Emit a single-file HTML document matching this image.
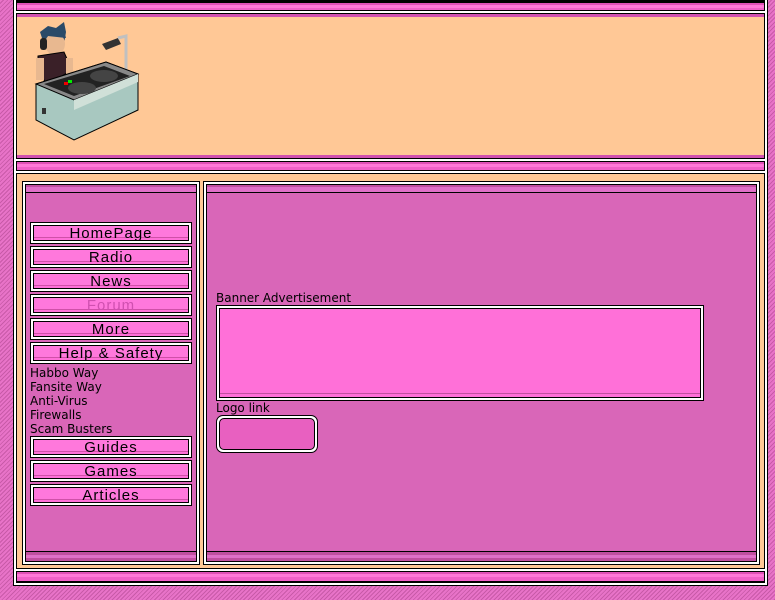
<!DOCTYPE html>
<html><head><style>
*{margin:0;padding:0;box-sizing:border-box}
body{width:775px;height:600px;overflow:hidden;position:relative;font-family:"Liberation Sans",sans-serif;
background:repeating-linear-gradient(135deg,#e873c8 0 2px,#c85aa8 2px 3px);}
.a{position:absolute}
.bar{background:linear-gradient(#e050b8 0 2px,#ff78d8 2px 5px,#f060c8 5px 100%);border:1px solid #000}
.btn{position:absolute;left:30px;width:162px;height:22px;border:1px solid #000;background:#fff;padding:2px}
.btn div{border:1px solid #000;height:16px;background:linear-gradient(#ff78dc 0 11px,#d050a8 11px 12px,#ff70d8 12px);text-align:center;font-size:15px;line-height:15px;letter-spacing:1px;color:#000}
.lk{position:absolute;left:30px;font-family:"DejaVu Sans",sans-serif;font-size:12px;line-height:14px;color:#000}
</style></head><body>
<div class="a" style="left:13px;top:0;width:755px;height:586px;background:#fff;border:1px solid #000;border-top:none"></div>
<div class="a" style="left:16px;top:0;width:749px;height:583px;background:#000"></div>
<div class="a bar" style="left:16px;top:2px;width:749px;height:9px"></div>
<div class="a" style="left:16px;top:11px;width:749px;height:2px;background:#fff"></div>
<div class="a" style="left:16px;top:13px;width:749px;height:146px;background:#ffc896;border:1px solid #000"></div>
<div class="a" style="left:17px;top:14px;width:747px;height:3px;background:#d050b0"></div>
<div class="a" style="left:17px;top:155px;width:747px;height:3px;background:#d050b0"></div>
<div class="a" style="left:16px;top:159px;width:749px;height:2px;background:#fff"></div>
<div class="a bar" style="left:16px;top:161px;width:749px;height:10px"></div>
<div class="a" style="left:16px;top:171px;width:749px;height:2px;background:#fff"></div>
<div class="a" style="left:16px;top:173px;width:749px;height:396px;background:#ffc896;border:1px solid #000"></div>
<div class="a" style="left:16px;top:569px;width:749px;height:2px;background:#fff"></div>
<div class="a bar" style="left:16px;top:571px;width:749px;height:11px"></div>
<svg class="a" style="left:34px;top:22px" width="110" height="120" viewBox="0 0 110 120">
<path d="M6 10 L14 4 L22 6 L30 0 L32 10 L30 22 L10 22Z" fill="#2a4a68"/>
<ellipse cx="21" cy="22" rx="10" ry="11" fill="#e8b890"/>
<path d="M12 10 L30 8 L32 16 L14 14Z" fill="#2a4a68"/>
<rect x="6" y="16" width="7" height="12" rx="3" fill="#222"/>
<path d="M4 34 L30 30 L38 48 L14 62 L4 52Z" fill="#3a2028" stroke="#000"/>
<rect x="2" y="36" width="8" height="22" fill="#e8b890"/>
<rect x="32" y="36" width="7" height="22" fill="#e8b890"/>
<path d="M68 22 L84 16 L87 22 L72 28Z" fill="#333"/>
<path d="M84 16 L92 14 L92 54" stroke="#c0c0c0" stroke-width="3" fill="none"/>
<path d="M2 62 L72 40 L104 52 L104 88 L40 118 L2 98Z" fill="#a8c8c0" stroke="#000"/>
<path d="M2 62 L72 40 L104 52 L40 78Z" fill="#888" stroke="#000"/>
<path d="M10 62 L70 44 L96 54 L40 74Z" fill="#222"/>
<ellipse cx="48" cy="66" rx="14" ry="6" fill="#444"/>
<ellipse cx="70" cy="54" rx="14" ry="6" fill="#444"/>
<rect x="30" y="60" width="4" height="3" fill="#e00"/><rect x="34" y="58" width="4" height="3" fill="#0e0"/>
<path d="M40 78 L104 52 L104 60 L40 88Z" fill="#d0e0d8"/>
<rect x="8" y="86" width="4" height="6" fill="#333"/>
</svg>
<div class="a" style="left:22px;top:181px;width:178px;height:384px;background:#fff;border:1px solid #000"></div>
<div class="a" style="left:25px;top:184px;width:172px;height:378px;background:#d966b8;border:1px solid #000"></div>
<div class="a" style="left:26px;top:185px;width:170px;height:7px;background:linear-gradient(#c050a0 0 2px,#e070c8 2px)"></div>
<div class="a" style="left:26px;top:192px;width:170px;height:1px;background:#000"></div>
<div class="a" style="left:26px;top:551px;width:170px;height:10px;background:linear-gradient(#000 0 1px,#c050a0 1px 4px,#e070c8 4px 7px,#c050a0 7px)"></div>
<div class="a" style="left:203px;top:181px;width:557px;height:384px;background:#fff;border:1px solid #000"></div>
<div class="a" style="left:206px;top:184px;width:551px;height:378px;background:#d966b8;border:1px solid #000"></div>
<div class="a" style="left:207px;top:185px;width:549px;height:7px;background:linear-gradient(#c050a0 0 2px,#e070c8 2px)"></div>
<div class="a" style="left:207px;top:192px;width:549px;height:1px;background:#000"></div>
<div class="a" style="left:207px;top:551px;width:549px;height:10px;background:linear-gradient(#000 0 1px,#c050a0 1px 4px,#e070c8 4px 7px,#c050a0 7px)"></div>
<div class="btn" style="top:222px"><div>HomePage</div></div>
<div class="btn" style="top:246px"><div>Radio</div></div>
<div class="btn" style="top:270px"><div>News</div></div>
<div class="btn" style="top:294px"><div style="color:#d050b0">Forum</div></div>
<div class="btn" style="top:318px"><div>More</div></div>
<div class="btn" style="top:342px"><div>Help &amp; Safety</div></div>
<div class="lk" style="top:366px">Habbo Way</div>
<div class="lk" style="top:380px">Fansite Way</div>
<div class="lk" style="top:394px">Anti-Virus</div>
<div class="lk" style="top:408px">Firewalls</div>
<div class="lk" style="top:422px">Scam Busters</div>
<div class="btn" style="top:436px"><div>Guides</div></div>
<div class="btn" style="top:460px"><div>Games</div></div>
<div class="btn" style="top:484px"><div>Articles</div></div>
<div class="lk" style="left:216px;top:291px">Banner Advertisement</div>
<div class="a" style="left:216px;top:305px;width:488px;height:96px;background:#fff;border:1px solid #000;padding:2px"><div style="height:100%;border:1px solid #000;background:linear-gradient(#ff70d8 0 84px,#c050a0 84px 85px,#ff70d8 85px)"></div></div>
<div class="lk" style="left:216px;top:401px">Logo link</div>
<div class="a" style="left:216px;top:415px;width:102px;height:38px;background:#fff;border:1px solid #000;border-radius:7px;padding:2px"><div style="height:100%;border:1px solid #000;border-radius:5px;background:#e860c0"></div></div>
</body></html>
